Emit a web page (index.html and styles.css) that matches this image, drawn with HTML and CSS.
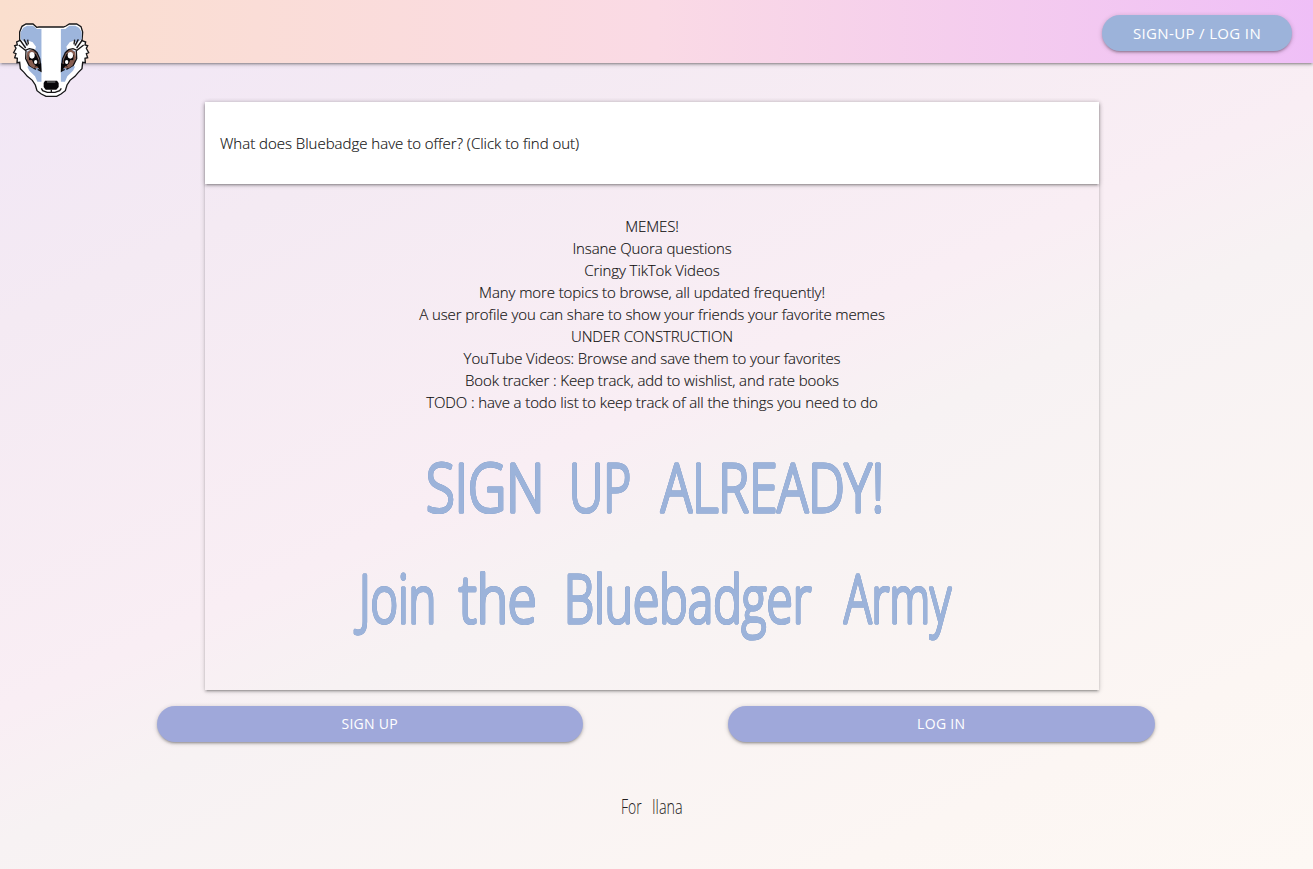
FILE: index.html
```html
<!DOCTYPE html>
<html lang="en">
<head>
<meta charset="utf-8">
<title>Bluebadge</title>
<link rel="stylesheet" href="styles.css">
</head>
<body>
<header class="nav">
  <svg class="logo" viewBox="36 36 234 228" aria-label="Bluebadge">
    <path class="outline" d="M59 92 59 66 66 49 78 42 99 42 110 52 117 51 190 51 198 48 208 42 230 42 243 50 248 66 246 92 257 96 255 105 263 107 259 115 266 128 259 131 263 143 255 145 256 158 248 157 246 176 235 187 225 199 210 211 201 225 196 242 183 252 170 259 138 259 124 252 111 242 106 225 97 211 82 199 72 187 61 176 59 157 51 158 52 145 44 143 48 131 41 128 48 115 44 107 52 105 50 96Z"/>
    <g id="side">
      <path class="fur" d="M62 88 62 66 70 53 81 47 99 47 111 57 125 57V215H112L105 199 88 182 82 170 90 165 74 96Z"/>
      <path class="white" d="M76 100 86 92 98 97 108 110 104 124 90 120 80 124Z"/>
      <path class="brown" d="M82 126 92 119 106 121 114 138 121 166 114 175 99 175 84 162 79 143Z"/>
      <path class="lash" d="M60 90 77 114M72 88 82 107M83 89 85 103M56 105 76 121 88 116 101 119 111 128 119 146 124 184 113 178M78 122 77 146 87 166 108 178"/>
      <path class="dark" d="M86 136 98 126 108 133 116 151 116 167 102 170 88 158ZM109 165 124 160V187Z"/>
      <ellipse class="white" cx="96" cy="136" rx="8" ry="10"/>
      <ellipse class="white" cx="107" cy="156" rx="5" ry="6"/>
      <path class="brown" d="M85 151 96 150 101 162 107 166 101 175 90 167Z"/>
    </g>
    <use href="#side" transform="translate(307 0) scale(-1 1)"/>
    <path class="stripe" d="M125 54H182V218H125Z"/>
    <path class="dark" d="M135 212H171L176 219V231L169 239H137L131 231V219Z"/>
    <path class="shine" d="M141 216H166"/>
    <path class="line" d="M124 235 128 242 142 247H165L179 242 184 235M154 239V246"/>
  </svg>
  <a class="btn btn-nav">SIGN-UP / LOG IN</a>
</header>
<main class="main">
  <section class="card">
    <div class="card-head">What does Bluebadge have to offer? (Click to find out)</div>
    <div class="card-body">
      <ul class="offers">
        <li>MEMES!</li>
        <li>Insane Quora questions</li>
        <li>Cringy TikTok Videos</li>
        <li>Many more topics to browse, all updated frequently!</li>
        <li>A user profile you can share to show your friends your favorite memes</li>
        <li>UNDER CONSTRUCTION</li>
        <li>YouTube Videos: Browse and save them to your favorites</li>
        <li>Book tracker : Keep track, add to wishlist, and rate books</li>
        <li>TODO : have a todo list to keep track of all the things you need to do</li>
      </ul>
      <svg class="lettering" viewBox="0 0 620 230">
        <text transform="translate(84 75) scale(.8 1)">SIGN</text>
        <text transform="translate(227 75) scale(.72 1)">UP</text>
        <text transform="translate(319 75) scale(.78 1)">ALREADY!</text>
        <text transform="translate(17 186) scale(.71 1)">Join</text>
        <text transform="translate(117 186) scale(.8 1)">the</text>
        <text transform="translate(222 186) scale(.725 1)">Bluebadger</text>
        <text transform="translate(502 186) scale(.695 1)">Army</text>
      </svg>
    </div>
  </section>
  <div class="actions">
    <a class="btn">SIGN UP</a>
    <a class="btn">LOG IN</a>
  </div>
</main>
<footer class="footer">
  <svg class="dedication" viewBox="0 0 80 34">
    <text transform="translate(9 25) scale(.7 1)">For</text>
    <text transform="translate(40 25) scale(.72 1)">Ilana</text>
  </svg>
</footer>
</body>
</html>
```
FILE: styles.css
```css
* { box-sizing: border-box; }
body {
  margin: 0;
  min-height: 869px;
  overflow: hidden;
  font: 300 15px/22px "Open Sans", "Noto Sans", sans-serif;
  color: #111;
  background: linear-gradient(155deg, #f1e6f7 0%, #f4eaf3 22%, #f9eef4 48%, #f7f2f3 57%, #fcf6f3 85%, #fdf8f4 100%);
}
.nav, .card, .card-head, .btn {
  box-shadow: 0 2px 2px 0 rgba(0,0,0,.14), 0 3px 1px -2px rgba(0,0,0,.12), 0 1px 5px 0 rgba(0,0,0,.2);
}
.nav {
  height: 63px;
  display: flex;
  justify-content: space-between;
  align-items: flex-start;
  padding: 15px 21px 0 12px;
  background: linear-gradient(90deg, #fadfce 0%, #fadae5 50%, #efbff7 100%);
}
.logo { width: 78px; height: 76px; margin-top: 7px; flex: none; position: relative; z-index: 1; }
.outline { fill: #fff; stroke: #171719; stroke-width: 4; }
.fur { fill: #9db5dc; }
.white { fill: #fff; }
.stripe { fill: #fff; }
.brown { fill: #875d50; }
.dark { fill: #080709; }
.lash, .line { fill: none; stroke: #151315; stroke-width: 4; }
.shine { fill: none; stroke: #686869; stroke-width: 4; }
.btn {
  height: 36px;
  border-radius: 18px;
  background: #9fa8da;
  color: #fff;
  font-size: 14px;
  font-weight: 400;
  line-height: 36px;
  letter-spacing: .3px;
  text-align: center;
}
.btn-nav { width: 190px; background: #9cb3da; font-size: 15px; letter-spacing: .35px; }
.main { display: flex; flex-direction: column; align-items: center; padding: 39px 9px 0 0; }
.card { width: 894px; height: 588px; }
.card-head { height: 82px; padding: 30px 15px; background: #fff; letter-spacing: -.01px; -webkit-text-stroke: .15px #111; }
.card-body { display: flex; flex-direction: column; align-items: center; padding-top: 32px; }
.offers { list-style: none; margin: -1px 0 0; padding: 0; text-align: center; letter-spacing: -.1px; -webkit-text-stroke: .15px #111; }
.lettering { width: 620px; height: 230px; margin-top: 24px; overflow: visible; filter: drop-shadow(0 0 .6px #6f8dbb); }
.lettering text {
  font-family: "Open Sans", sans-serif;
  font-size: 66px;
  font-weight: 300;
  fill: #9cb3da;
  stroke: #9cb3da;
  stroke-width: 3px;
  stroke-linejoin: round;
}
.actions { display: flex; gap: 145px; width: 998px; margin: 16px 0 0 7px; }
.actions .btn { flex: 1; line-height: 35px; }
.footer { display: flex; justify-content: center; margin-top: 47px; padding-right: 9px; }
.dedication { width: 80px; height: 34px; }
.dedication text { font: 300 20px "Open Sans", sans-serif; fill: #242020; }
```
